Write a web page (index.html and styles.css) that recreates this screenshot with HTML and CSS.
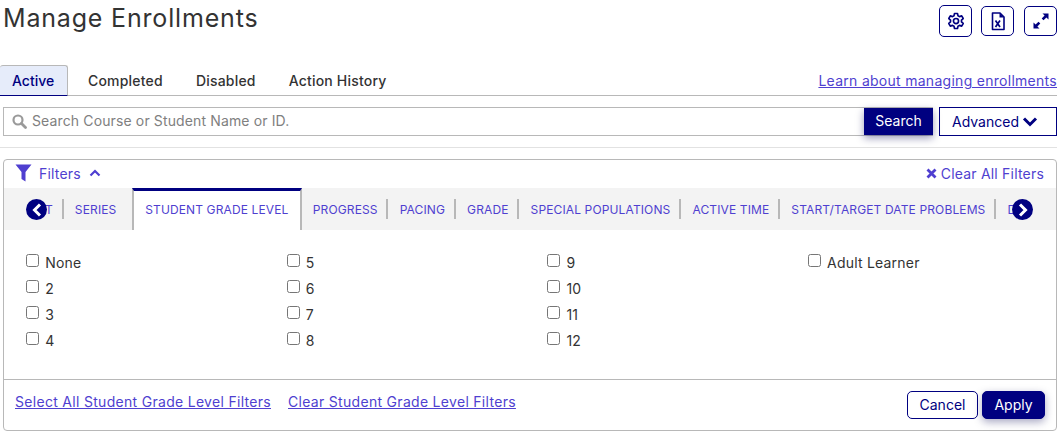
FILE: index.html
```html
<!DOCTYPE html>
<html lang="en">
<head>
  <meta charset="UTF-8">
  <meta name="viewport" content="width=device-width, initial-scale=1.0">
  <title>Manage Enrollments</title>
  <link rel="stylesheet" href="styles.css">
</head>
<body>

  <div class="page-head">
    <h1>Manage Enrollments</h1>
    <div class="head-actions">
      <button class="icon-btn icon-btn-tall" aria-label="Settings">
        <svg width="18" height="18" viewBox="0 0 24 24" fill="none" stroke="#000080" stroke-width="2.2" stroke-linejoin="round"><path d="M10 2h4l.7 3.1 1.9 1.1 3-1 2 3.5-2.300 2.100v2.400l2.300 2.100-2 3.500-3-1-1.900 1.100L14 22h-4l-.7-3.100-1.900-1.100-3 1-2-3.500 2.300-2.100v-2.400L2.400 8.700l2-3.500 3 1 1.900-1.100z"/><circle cx="12" cy="12" r="3.400"/></svg>
      </button>
      <button class="icon-btn" aria-label="Export">
        <svg width="14" height="19" viewBox="0 0 14 19"><path d="M1.500 1h7.500l4 4v12.500H1.500z" fill="none" stroke="#000080" stroke-width="1.600" stroke-linejoin="round"/><path d="M8.500 1v4.500H13z" fill="#000080"/><path d="M4.500 8.500l4.500 6.500M9 8.500l-4.500 6.500" stroke="#000080" stroke-width="1.700" fill="none"/></svg>
      </button>
      <button class="icon-btn" aria-label="Expand">
        <svg width="16" height="16" viewBox="0 0 16 16" fill="#000080"><path d="M9.500 0.500H15.500V6.500L13.400 4.400 10.500 7.300 8.700 5.500 11.600 2.600z"/><path d="M6.500 15.500H0.500V9.500L2.600 11.600 5.500 8.700 7.300 10.500 4.400 13.400z"/></svg>
      </button>
    </div>
  </div>

  <div class="tabs">
    <a class="tab active">Active</a>
    <a class="tab">Completed</a>
    <a class="tab">Disabled</a>
    <a class="tab">Action History</a>
    <a class="learn-link" href="#">Learn about managing enrollments</a>
  </div>

  <div class="search-row">
    <div class="search-box">
      <svg class="search-icon" width="15" height="15" viewBox="0 0 15 15"><circle cx="6" cy="6" r="4.500" fill="none" stroke="#9a9a9a" stroke-width="2.200"/><path d="M9.500 9.500l4 4" stroke="#9a9a9a" stroke-width="2.800" stroke-linecap="round"/></svg>
      <input type="text" placeholder="Search Course or Student Name or ID.">
      <button class="search-btn">Search</button>
    </div>
    <button class="advanced-btn">Advanced
      <svg width="16" height="11" viewBox="0 0 16 11"><path d="M2 2.500l6 6 6-6" fill="none" stroke="#000080" stroke-width="3"/></svg>
    </button>
  </div>

  <div class="filters-card">
    <div class="filters-head">
      <div class="filters-title">
        <svg width="17" height="18" viewBox="0 0 17 18" fill="#4f3fd0"><path d="M0.500 0.500h16L10.500 8v9.500L6.500 15V8z"/></svg>
        <span>Filters</span>
        <svg width="12" height="8" viewBox="0 0 12 8"><path d="M1.500 6.500L6 2l4.500 4.500" fill="none" stroke="#4f3fd0" stroke-width="2.200"/></svg>
      </div>
      <a class="clear-all">
        <svg width="11" height="11" viewBox="0 0 11 11"><path d="M1.500 1.500l8 8M9.500 1.500l-8 8" fill="none" stroke="#4f3fd0" stroke-width="2.800"/></svg>
        Clear All Filters
      </a>
    </div>

    <div class="filter-strip">
      <div class="filter-scroll">
        <div class="filter-tabs">
          <a class="ftab">FORMAT</a>
          <a class="ftab no-sep">SERIES</a>
          <a class="ftab current">STUDENT GRADE LEVEL</a>
          <a class="ftab">PROGRESS</a>
          <a class="ftab">PACING</a>
          <a class="ftab">GRADE</a>
          <a class="ftab">SPECIAL POPULATIONS</a>
          <a class="ftab">ACTIVE TIME</a>
          <a class="ftab">START/TARGET DATE PROBLEMS</a>
          <a class="ftab">DATES</a>
        </div>
      </div>
      <span class="strip-arrow arrow-left"><svg width="12" height="14" viewBox="0 0 12 14"><path d="M9 1.500L3.500 7 9 12.500" fill="none" stroke="#fff" stroke-width="3"/></svg></span>
      <span class="strip-arrow arrow-right"><svg width="12" height="14" viewBox="0 0 12 14"><path d="M3 1.500L8.500 7 3 12.500" fill="none" stroke="#fff" stroke-width="3"/></svg></span>
    </div>

    <div class="check-grid">
      <label><input type="checkbox"> None</label>
      <label><input type="checkbox"> 5</label>
      <label><input type="checkbox"> 9</label>
      <label><input type="checkbox"> Adult Learner</label>
      <label><input type="checkbox"> 2</label>
      <label><input type="checkbox"> 6</label>
      <label><input type="checkbox"> 10</label>
      <span></span>
      <label><input type="checkbox"> 3</label>
      <label><input type="checkbox"> 7</label>
      <label><input type="checkbox"> 11</label>
      <span></span>
      <label><input type="checkbox"> 4</label>
      <label><input type="checkbox"> 8</label>
      <label><input type="checkbox"> 12</label>
      <span></span>
    </div>

    <div class="card-foot">
      <div class="foot-links">
        <a href="#">Select All Student Grade Level Filters</a>
        <a href="#">Clear Student Grade Level Filters</a>
      </div>
      <div class="foot-btns">
        <button class="cancel-btn">Cancel</button>
        <button class="apply-btn">Apply</button>
      </div>
    </div>
  </div>

</body>
</html>
```

FILE: styles.css
```css
html, body {
  margin: 0;
  padding: 0;
  overflow: hidden;
}

body {
  height: 434px;
  background: #fff;
  color: #333;
  font-family: Inter, "Liberation Sans", sans-serif;
  font-size: 14px;
}

button {
  font-family: inherit;
  cursor: pointer;
}

.page-head {
  display: flex;
  justify-content: space-between;
  height: 65px;
  padding: 0 4px 0 3px;
}

h1 {
  margin: 2px 0 0;
  font-size: 25px;
  line-height: 32px;
  font-weight: 400;
  letter-spacing: 0.82px;
  color: #333;
}

.head-actions {
  display: flex;
  align-items: flex-start;
  gap: 10px;
  padding-top: 5px;
}

.icon-btn {
  display: flex;
  align-items: center;
  justify-content: center;
  width: 33px;
  height: 30px;
  margin-top: 1px;
  padding: 0;
  background: #fff;
  border: 1px solid #000080;
  border-radius: 5px;
}

.icon-btn-tall {
  height: 32px;
  margin-top: 0;
  margin-right: -1px;
}

/* tabs */
.tabs {
  display: flex;
  align-items: stretch;
  width: 1057px;
  height: 31px;
  box-sizing: border-box;
  border-bottom: 1px solid #b8b8b8;
}

.tab {
  padding: 0 12px;
  margin-right: 9px;
  line-height: 31px;
  font-weight: 500;
  letter-spacing: 0.2px;
  color: #333;
}

.tab.active {
  width: 68px;
  box-sizing: border-box;
  margin-right: 8px;
  background: #e6ecfa;
  border: 1px solid #b8b8b8;
  border-bottom: 1px solid #000080;
  border-left: 0;
  border-radius: 3px 3px 0 0;
  color: #000080;
  height: 31px;
  line-height: 30px;
  letter-spacing: 0;
}

.learn-link {
  margin-left: auto;
  line-height: 31px;
  color: #4f3fd0;
  letter-spacing: 0.28px;
}

/* search */
.search-row {
  display: flex;
  gap: 6px;
  margin: 11px 4px 0 0;
  padding: 0 0 11px 3px;
  border-bottom: 1px solid #e2e2e2;
}

.search-box {
  display: flex;
  align-items: stretch;
  flex: 1;
  height: 27px;
  position: relative;
  border: 1px solid #b8b8b8;
  border-right: 0;
}

.search-icon {
  position: absolute;
  left: 8px;
  top: 6px;
}

.search-box input {
  flex: 1;
  padding: 0 0 2px 28px;
  border: 0;
  outline: none;
  font-family: inherit;
  font-size: 14px;
  letter-spacing: 0.13px;
  color: #333;
}

.search-box input::placeholder {
  color: #808080;
}

.search-btn {
  width: 69px;
  padding: 0 0 2px;
  background: #000080;
  color: #fff;
  border: 0;
  font-size: 14px;
  box-shadow: 0 3px 8px rgba(0, 0, 80, 0.4);
}

.advanced-btn {
  display: flex;
  align-items: center;
  gap: 3px;
  width: 118px;
  height: 29px;
  padding: 0 0 1px 12px;
  background: #fff;
  border: 1px solid #000080;
  color: #000080;
  font-size: 14px;
}

/* filters card */
.filters-card {
  width: 1054px;
  height: 272px;
  box-sizing: border-box;
  margin: 11px 0 0 3px;
  border: 1px solid #b8b8b8;
  border-radius: 4px;
}

.filters-head {
  display: flex;
  justify-content: space-between;
  align-items: center;
  height: 28px;
  box-sizing: border-box;
  padding: 0 12px 2px 11px;
  color: #4f3fd0;
}

.filters-title {
  display: flex;
  align-items: center;
  gap: 7px;
  letter-spacing: 0.2px;
}

.filters-title span {
  margin-right: 1px;
}

.clear-all {
  letter-spacing: 0.2px;
}

.filter-strip {
  position: relative;
  height: 42px;
  background: #f3f3f3;
}

.filter-scroll {
  height: 42px;
  margin: 0 29px 0 33px;
  overflow: hidden;
}

.filter-tabs {
  display: flex;
  margin-left: -46px;
  height: 42px;
  white-space: nowrap;
}

.ftab {
  position: relative;
  flex: none;
  padding: 0 10.75px 0 11.25px;
  font-size: 12px;
  line-height: 43px;
  letter-spacing: 0.13px;
  color: #4f3fd0;
}

.ftab::after {
  content: "";
  position: absolute;
  right: 0;
  top: 11px;
  width: 2px;
  height: 20px;
  background: #b8b8b8;
}

.ftab.no-sep::after, .ftab.current::after {
  display: none;
}

.ftab.current {
  height: 42px;
  box-sizing: border-box;
  margin-left: 5px;
  padding: 0 11px 0 11px;
  line-height: 37px;
  background: #fff;
  border-top: 3px solid #000080;
  border-left: 2px solid #b8b8b8;
  border-right: 2px solid #b8b8b8;
}

.strip-arrow {
  position: absolute;
  top: 11px;
  display: flex;
  align-items: center;
  justify-content: center;
  width: 21px;
  height: 21px;
  border-radius: 50%;
  background: #000080;
}

.arrow-left {
  left: 22px;
}

.arrow-right {
  left: 1008px;
}

/* checkboxes */
.check-grid {
  display: grid;
  grid-template-columns: repeat(4, 260.670px);
  grid-auto-rows: 26px;
  height: 150px;
  box-sizing: border-box;
  padding: 20px 0 0 22px;
  border-bottom: 1px solid #b8b8b8;
}

.check-grid label {
  display: block;
  line-height: 26px;
  letter-spacing: 0.2px;
  color: #333;
}

.check-grid input {
  margin: 0 2px 0 0;
  vertical-align: 1px;
}

/* footer */
.card-foot {
  display: flex;
  justify-content: space-between;
  align-items: flex-start;
  padding: 11px 11px 0 11px;
}

.foot-links {
  display: flex;
  gap: 17px;
  line-height: 22px;
  letter-spacing: 0.3px;
}

.foot-links a {
  color: #4f3fd0;
}

.foot-btns {
  display: flex;
  gap: 4px;
}

.cancel-btn, .apply-btn {
  height: 28px;
  padding: 0 0 1px;
  border-radius: 5px;
  font-size: 14px;
}

.cancel-btn {
  width: 71px;
  background: #fff;
  border: 1px solid #000080;
  color: #000080;
}

.apply-btn {
  width: 63px;
  background: #000080;
  border: 1px solid #000080;
  color: #fff;
  box-shadow: 0 3px 8px rgba(0, 0, 80, 0.35);
}
```
